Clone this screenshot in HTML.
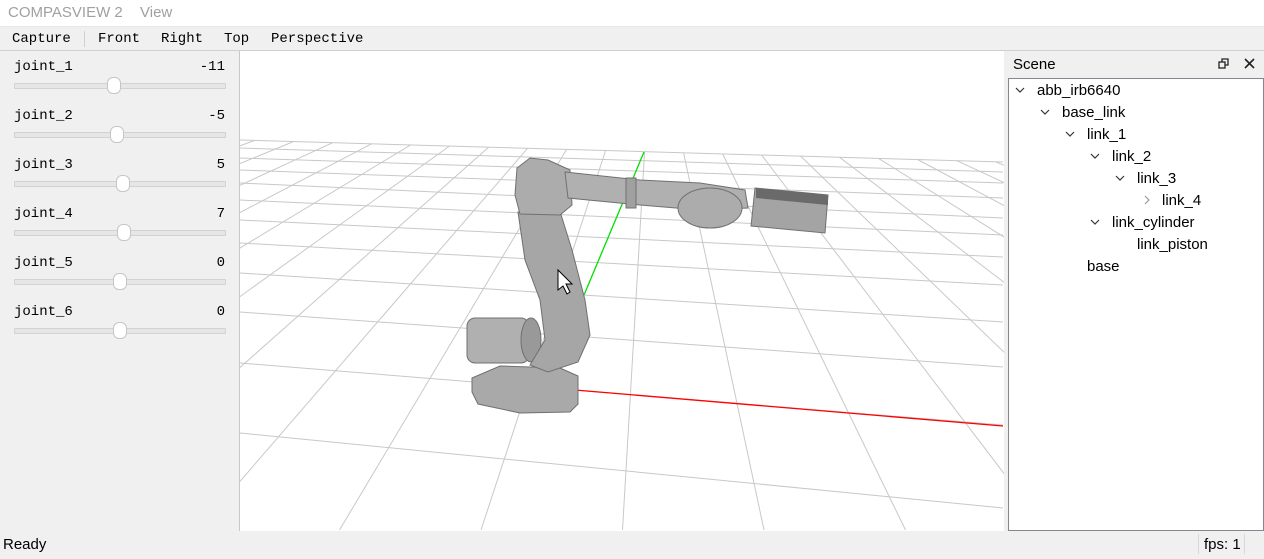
<!DOCTYPE html>
<html><head><meta charset="utf-8"><style>
*{margin:0;padding:0;box-sizing:border-box}
body{width:1264px;height:556px;overflow:hidden;background:#f0f0f0;font-family:"Liberation Sans",sans-serif;position:relative}
.abs{position:absolute}
#title{left:0;top:0;width:1264px;height:26px;background:#fff;color:#a0a0a0;font-size:15px;line-height:26px}
#tb{left:0;top:26px;width:1264px;height:25px;background:#f0f0f0;border-top:1px solid #e6e6e6;border-bottom:1px solid #d0d0d0;font-family:"Liberation Mono",monospace;font-size:14px;line-height:25px;color:#000}
#left{left:0;top:51px;width:240px;height:480px;background:#f0f0f0;border-right:1px solid #c8c8c8}
.mono{font-family:"Liberation Mono",monospace;font-size:14px;color:#000}
.track{position:absolute;left:14px;width:212px;height:6px;background:#e6e6e6;border:1px solid #d2d2d2;border-radius:1px}
.knob{position:absolute;width:14px;height:17px;background:#fff;border:1px solid #c6c6c6;border-radius:6px}
#view{left:240px;top:51px;width:764px;height:480px;background:#fff;overflow:hidden}
#dock{left:1004px;top:51px;width:260px;height:480px;background:#f0f0f0}
#tree{left:1008px;top:78px;width:256px;height:453px;background:#fff;border:1px solid #828790}
.t{position:absolute;font-size:15px;color:#000;line-height:22px}
#status{left:0;top:531px;width:1264px;height:25px;background:#f0f0f0;font-size:15px;line-height:28px}
</style></head><body>
<div id="title" class="abs"><span style="position:absolute;left:8px">COMPASVIEW 2</span><span style="position:absolute;left:140px">View</span></div>
<div id="tb" class="abs">
<span class="abs" style="left:12px">Capture</span>
<span class="abs" style="left:84px;top:4px;width:1px;height:16px;background:#d0d0d0"></span>
<span class="abs" style="left:98px">Front</span>
<span class="abs" style="left:161px">Right</span>
<span class="abs" style="left:224px">Top</span>
<span class="abs" style="left:271px">Perspective</span>
</div>
<div id="left" class="abs">
<div class="abs mono" style="left:14px;top:8px">joint_1</div><div class="abs mono" style="right:14px;top:8px">-11</div>
<div class="track" style="top:32px"></div><div class="knob" style="left:107px;top:26px"></div>
<div class="abs mono" style="left:14px;top:57px">joint_2</div><div class="abs mono" style="right:14px;top:57px">-5</div>
<div class="track" style="top:81px"></div><div class="knob" style="left:110px;top:75px"></div>
<div class="abs mono" style="left:14px;top:106px">joint_3</div><div class="abs mono" style="right:14px;top:106px">5</div>
<div class="track" style="top:130px"></div><div class="knob" style="left:116px;top:124px"></div>
<div class="abs mono" style="left:14px;top:155px">joint_4</div><div class="abs mono" style="right:14px;top:155px">7</div>
<div class="track" style="top:179px"></div><div class="knob" style="left:117px;top:173px"></div>
<div class="abs mono" style="left:14px;top:204px">joint_5</div><div class="abs mono" style="right:14px;top:204px">0</div>
<div class="track" style="top:228px"></div><div class="knob" style="left:113px;top:222px"></div>
<div class="abs mono" style="left:14px;top:253px">joint_6</div><div class="abs mono" style="right:14px;top:253px">0</div>
<div class="track" style="top:277px"></div><div class="knob" style="left:113px;top:271px"></div>
</div>
<div id="view" class="abs">
<svg class="abs" style="left:-240px;top:-51px" width="1264" height="556" viewBox="0 0 1264 556">
<g stroke="#c8c8c8" stroke-width="1" fill="none">
<line x1="240" y1="433" x2="1003" y2="508"/>
<line x1="240" y1="363" x2="1003" y2="425"/>
<line x1="240" y1="312" x2="1003" y2="367"/>
<line x1="240" y1="273" x2="1003" y2="322"/>
<line x1="240" y1="243" x2="1003" y2="285"/>
<line x1="240" y1="220" x2="1003" y2="257"/>
<line x1="240" y1="200" x2="1003" y2="235"/>
<line x1="240" y1="183" x2="1003" y2="218"/>
<line x1="240" y1="170" x2="1003" y2="198"/>
<line x1="240" y1="158" x2="1003" y2="183"/>
<line x1="240" y1="148" x2="1003" y2="172"/>
<line x1="240" y1="140" x2="1003" y2="162"/>
<line x1="254.6" y1="140.4" x2="-792.5" y2="530"/>
<line x1="293.6" y1="141.5" x2="-651" y2="530"/>
<line x1="332.6" y1="142.7" x2="-509.5" y2="530"/>
<line x1="371.6" y1="143.8" x2="-368" y2="530"/>
<line x1="410.6" y1="144.9" x2="-226.5" y2="530"/>
<line x1="449.6" y1="146" x2="-85" y2="530"/>
<line x1="488.6" y1="147.2" x2="56.5" y2="530"/>
<line x1="527.6" y1="148.3" x2="198" y2="530"/>
<line x1="566.6" y1="149.4" x2="339.5" y2="530"/>
<line x1="605.6" y1="150.5" x2="481" y2="530"/>
<line x1="644.6" y1="151.6" x2="622.5" y2="530"/>
<line x1="683.6" y1="152.8" x2="764" y2="530"/>
<line x1="722.6" y1="153.9" x2="905.5" y2="530"/>
<line x1="761.6" y1="155" x2="1047" y2="530"/>
<line x1="800.6" y1="156.1" x2="1188.5" y2="530"/>
<line x1="839.6" y1="157.3" x2="1330" y2="530"/>
<line x1="878.6" y1="158.4" x2="1471.5" y2="530"/>
<line x1="917.6" y1="159.5" x2="1613" y2="530"/>
<line x1="956.6" y1="160.6" x2="1754.5" y2="530"/>
<line x1="995.6" y1="161.8" x2="1896" y2="530"/>
</g>
<line x1="575" y1="390" x2="1003" y2="426" stroke="#ff0000" stroke-width="1.3"/>
<line x1="584" y1="295" x2="644" y2="152" stroke="#00e000" stroke-width="1.3"/>
<g fill="#a9a9a9" stroke="#707070" stroke-width="1">
<polygon points="472,378 500,366 560,368 578,376 578,404 570,412 520,413 478,404 472,392"/>
<rect x="467" y="318" width="62" height="45" rx="8" fill="#b0b0b0"/>
<ellipse cx="531" cy="340" rx="10" ry="22" fill="#999"/>
<path d="M518,212 L558,205 L572,250 L585,300 L590,335 L578,362 L548,372 L530,365 L545,340 L540,300 L525,260 Z" fill="#a6a6a6"/>
<path d="M517,168 L530,158 L548,160 L570,170 L572,205 L560,215 L520,214 L515,195 Z" fill="#acacac"/>
<polygon points="565,172 640,180 700,183 745,190 748,208 700,210 640,205 568,198" fill="#b0b0b0"/>
<rect x="626" y="178" width="10" height="30" fill="#a0a0a0"/>
<ellipse cx="710" cy="208" rx="32" ry="20" fill="#acacac"/>
<polygon points="755,188 828,195 825,233 751,226" fill="#a4a4a4"/>
<polygon points="756,188 828,195 828,205 756,198" fill="#6a6a6a" stroke="none"/>
</g>
<path d="M558,270 L558,290 L563,286 L567,294 L570,292 L566,284 L572,284 Z" fill="#fff" stroke="#000" stroke-width="1"/>
</svg>
</div>
<div id="dock" class="abs">
<div class="abs" style="left:9px;top:5px;font-size:15px;line-height:18px">Scene</div>
<svg class="abs" style="left:214px;top:7px" width="12" height="12" viewBox="0 0 12 12"><rect x="1" y="4" width="6" height="6" fill="none" stroke="#222" stroke-width="1.3"/><path d="M4,4 V1 H10 V7 H7" fill="none" stroke="#222" stroke-width="1.3"/></svg>
<svg class="abs" style="left:240px;top:7px" width="11" height="11" viewBox="0 0 11 11"><path d="M1,1 L10,10 M10,1 L1,10" stroke="#222" stroke-width="1.6"/></svg>
</div>
<div id="tree" class="abs"></div>
<svg class="abs" style="left:1008px;top:80px" width="256" height="200">
<g fill="none" stroke="#333" stroke-width="1.2">
<path d="M8,8 L12,12 L16,8"/>
<path d="M33,30 L37,34 L41,30"/>
<path d="M58,52 L62,56 L66,52"/>
<path d="M83,74 L87,78 L91,74"/>
<path d="M108,96 L112,100 L116,96"/>
<path d="M83,140 L87,144 L91,140"/>
<path d="M137,116 L141,120 L137,124" stroke="#999"/>
</g></svg>
<div class="t" style="left:1037px;top:80px">abb_irb6640</div>
<div class="t" style="left:1062px;top:102px">base_link</div>
<div class="t" style="left:1087px;top:124px">link_1</div>
<div class="t" style="left:1112px;top:146px">link_2</div>
<div class="t" style="left:1137px;top:168px">link_3</div>
<div class="t" style="left:1162px;top:190px">link_4</div>
<div class="t" style="left:1112px;top:212px">link_cylinder</div>
<div class="t" style="left:1137px;top:234px">link_piston</div>
<div class="t" style="left:1087px;top:256px">base</div>
<div id="status" class="abs">
<span class="abs" style="left:3px">Ready</span>
<span class="abs" style="left:1198px;top:3px;width:1px;height:20px;background:#d8d8d8"></span>
<span class="abs" style="left:1204px">fps: 1</span>
<span class="abs" style="left:1244px;top:3px;width:1px;height:20px;background:#d8d8d8"></span>
</div>
</body></html>
